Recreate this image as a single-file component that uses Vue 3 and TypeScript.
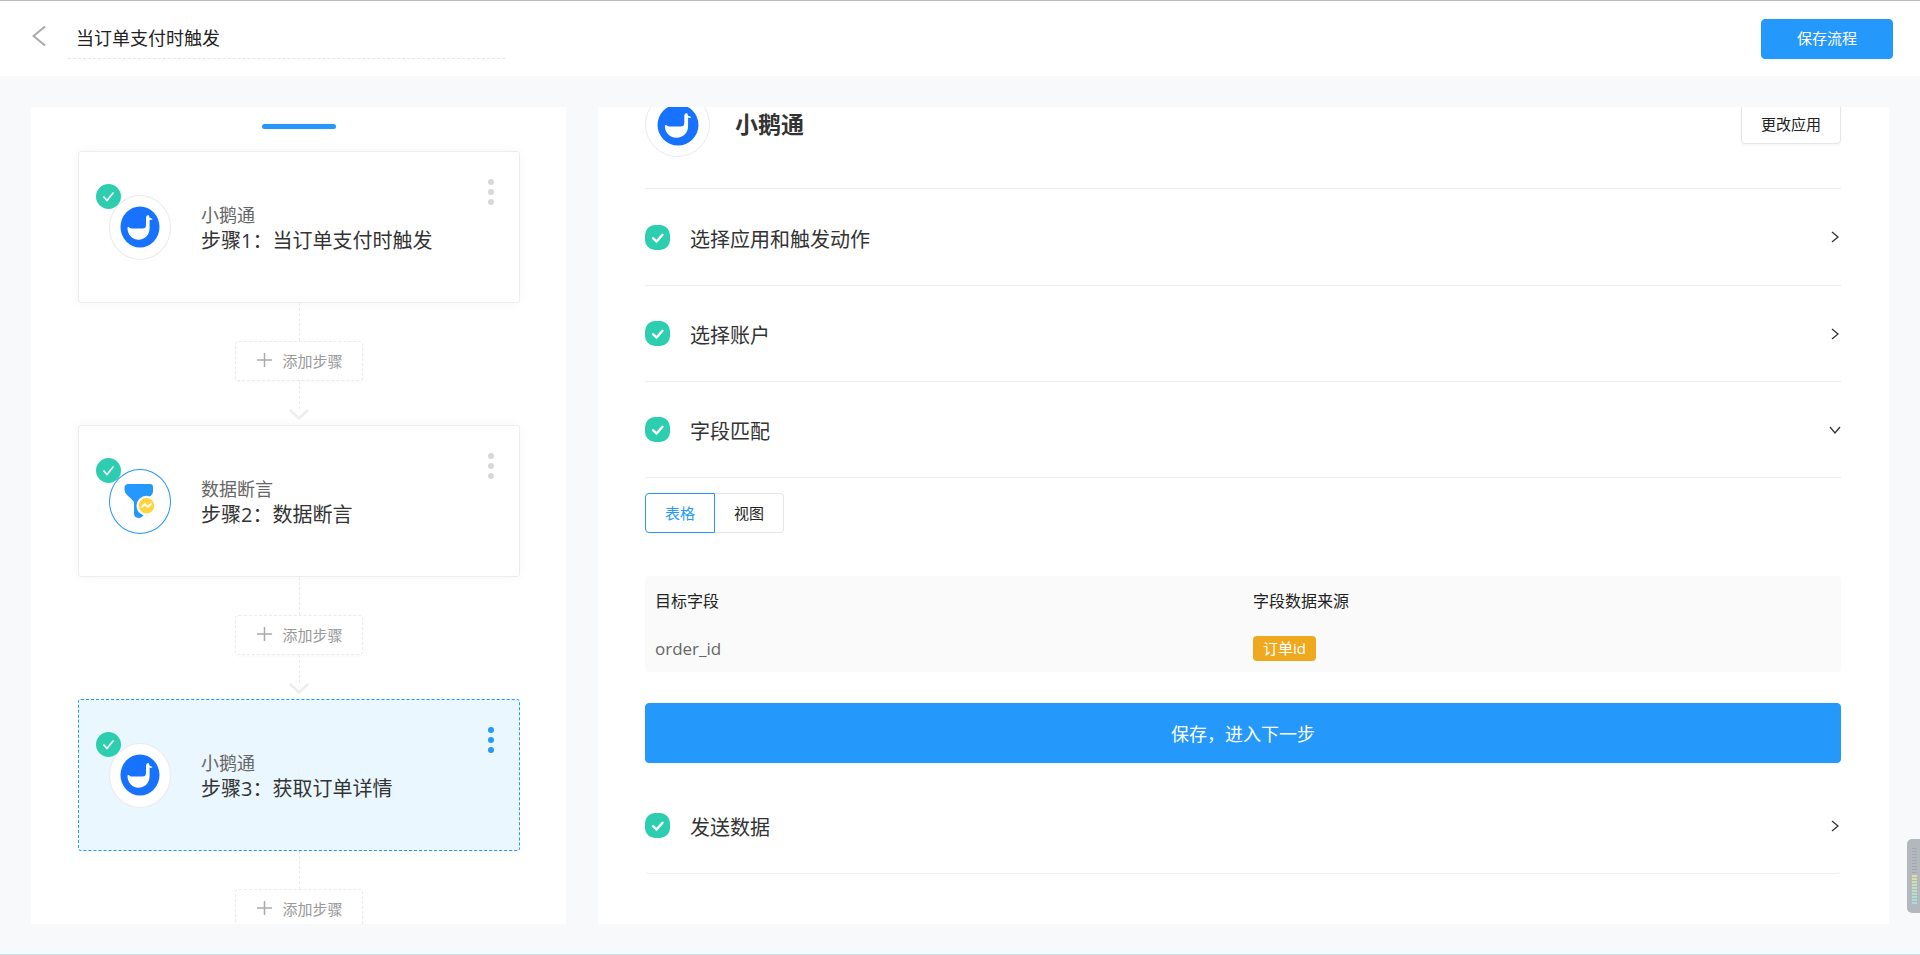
<script setup lang="ts">
import { ref } from 'vue'

interface Step {
  app: string
  title: string
  icon: 'goose' | 'filter'
}

const flowName = ref('当订单支付时触发')
const view = ref<'table' | 'graph'>('table')
const active = ref(2)

const steps: Step[] = [
  { app: '小鹅通', title: '步骤1：当订单支付时触发', icon: 'goose' },
  { app: '数据断言', title: '步骤2：数据断言', icon: 'filter' },
  { app: '小鹅通', title: '步骤3：获取订单详情', icon: 'goose' },
]

const openSections = ['选择应用和触发动作', '选择账户']
</script>

<template>
  <div class="page">
    <header class="topbar">
      <button class="back" type="button" aria-label="返回">
        <svg width="14" height="22" viewBox="0 0 14 22"><path d="M13 1.500L1.500 11L13 20.500" fill="none" stroke="#a9a9a9" stroke-width="2" /></svg>
      </button>
      <input v-model="flowName" class="flow-name" type="text" aria-label="流程名称" />
      <button class="btn primary save" type="button">保存流程</button>
    </header>

    <main class="columns">
      <section class="panel flow">
        <div class="marker"></div>
        <template v-for="(step, i) in steps" :key="i">
          <article class="card" :class="{ active: i === active }" @click="active = i">
            <div class="avatar" :class="step.icon">
              <svg v-if="step.icon === 'goose'" width="40" height="42" viewBox="0 0 40 42" preserveAspectRatio="none">
                <ellipse cx="20" cy="21" rx="19.500" ry="20.500" fill="#1672ff" />
                <path d="M7.500 22.500Q7.400 20.600 9 21.200Q10 22.600 12 22.600H22.500Q26 22.600 26 19V11.500Q26.200 9 28.200 9Q29.200 9 29.600 11.800L32.200 12.800V13.800H29.600V22C29.600 29 25 33.700 18.500 33.700C12 33.700 7.800 28.500 7.500 22.500Z" fill="#fff" />
              </svg>
              <svg v-else width="32" height="36" viewBox="0 0 32 36">
                <path d="M4.500 1H26Q29 1 29 4V8.500Q29 10.500 27 12.500L20 19V31.500Q18 35 14.500 35Q10 34.500 10 31V19.500Q9.500 17.500 4 13Q.5 10 .5 7V5Q.5 1 4.500 1Z" fill="#2598fb" />
                <circle cx="22.500" cy="22.700" r="10" fill="#fff" />
                <circle cx="22.500" cy="22.700" r="7.700" fill="#ffd43c" />
                <path d="M17.300 24.700L20.800 21.200L23.800 24L27.500 20.400" fill="none" stroke="#fff" stroke-width="1.800" />
              </svg>
              <span class="done">
                <svg width="25" height="25" viewBox="0 0 25 25"><path d="M7.500 12.500L11 16.500L17.500 8.500" fill="none" stroke="#fff" stroke-width="1.700" /></svg>
              </span>
            </div>
            <div class="info">
              <div class="app">{{ step.app }}</div>
              <div class="title">{{ step.title }}</div>
            </div>
            <button class="more" type="button" aria-label="更多"><i></i><i></i><i></i></button>
          </article>
          <div class="link">
            <span class="line upper"></span>
            <button class="add" type="button">
              <svg width="15" height="16" viewBox="0 0 15 16"><path d="M7.500 1V15M0 8H15" stroke="#aaa" stroke-width="1.500" /></svg>
              添加步骤
            </button>
            <span class="line lower"></span>
            <svg class="arrow" width="20" height="12" viewBox="0 0 20 12"><path d="M1.500 1.500L10 9.500L18.500 1.500" fill="none" stroke="#eee" stroke-width="2.500" stroke-linecap="round" /></svg>
          </div>
        </template>
      </section>

      <section class="panel detail">
        <div class="app-head">
          <div class="avatar big">
            <svg width="42" height="42" viewBox="0 0 40 42" preserveAspectRatio="none">
              <ellipse cx="20" cy="21" rx="19.500" ry="20.500" fill="#1672ff" />
              <path d="M7.500 22.500Q7.400 20.600 9 21.200Q10 22.600 12 22.600H22.500Q26 22.600 26 19V11.500Q26.200 9 28.200 9Q29.200 9 29.600 11.800L32.200 12.800V13.800H29.600V22C29.600 29 25 33.700 18.500 33.700C12 33.700 7.800 28.500 7.500 22.500Z" fill="#fff" />
            </svg>
          </div>
          <h2>小鹅通</h2>
          <button class="btn change" type="button">更改应用</button>
        </div>

        <button v-for="name in openSections" :key="name" class="row" type="button">
          <span class="tick"><svg width="25" height="25" viewBox="0 0 25 25"><path d="M8 13.200L11.500 16.500L17.500 9.800" fill="none" stroke="#fff" stroke-width="2.400" stroke-linecap="round" /></svg></span>
          <span class="label">{{ name }}</span>
          <svg class="chev" width="12" height="12" viewBox="0 0 12 12"><path d="M3 1L9 6L3 11" fill="none" stroke="#333" stroke-width="1.300" /></svg>
        </button>
        <button class="row" type="button">
          <span class="tick"><svg width="25" height="25" viewBox="0 0 25 25"><path d="M8 13.200L11.500 16.500L17.500 9.800" fill="none" stroke="#fff" stroke-width="2.400" stroke-linecap="round" /></svg></span>
          <span class="label">字段匹配</span>
          <svg class="chev" width="12" height="12" viewBox="0 0 12 12"><path d="M1 3L6 9L11 3" fill="none" stroke="#333" stroke-width="1.300" /></svg>
        </button>

        <div class="tabs">
          <button type="button" :class="{ on: view === 'table' }" @click="view = 'table'">表格</button>
          <button type="button" :class="{ on: view === 'graph' }" @click="view = 'graph'">视图</button>
        </div>

        <table class="fields">
          <thead>
            <tr><th>目标字段</th><th>字段数据来源</th></tr>
          </thead>
          <tbody>
            <tr><td>order_id</td><td><span class="tag">订单id</span></td></tr>
          </tbody>
        </table>

        <button class="btn primary next" type="button">保存，进入下一步</button>

        <button class="row last" type="button">
          <span class="tick"><svg width="25" height="25" viewBox="0 0 25 25"><path d="M8 13.200L11.500 16.500L17.500 9.800" fill="none" stroke="#fff" stroke-width="2.400" stroke-linecap="round" /></svg></span>
          <span class="label">发送数据</span>
          <svg class="chev" width="12" height="12" viewBox="0 0 12 12"><path d="M3 1L9 6L3 11" fill="none" stroke="#333" stroke-width="1.300" /></svg>
        </button>
      </section>
    </main>

    <div class="meter"><span class="off"></span><span class="lit"></span></div>
  </div>
</template>

<style>
html,
body {
  margin: 0;
}
</style>

<style scoped>
.page {
  box-sizing: border-box;
  height: 100vh;
  display: flex;
  flex-direction: column;
  overflow: hidden;
  background: #f7f9fb;
  border-top: 1px solid #bbb;
  border-bottom: 1px solid #c8e2ec;
  font-family: "Open Sans", "Noto Sans CJK SC", sans-serif;
  font-weight: 400;
  color: #333;
}
.page * {
  box-sizing: border-box;
}
button,
input {
  font-family: inherit;
  margin: 0;
}
button {
  cursor: pointer;
}
svg {
  display: block;
}
.topbar {
  height: 75px;
  flex: none;
  display: flex;
  align-items: center;
  padding: 0 27px 0 32px;
  background: #fff;
}
.back {
  padding: 0;
  border: 0;
  background: none;
  margin-bottom: 6px;
}
.flow-name {
  width: 437px;
  height: 40px;
  margin-left: 22px;
  padding: 0 8px 2px;
  border: 0;
  border-bottom: 1px dashed #e6e6e6;
  background: none;
  font-size: 18px;
  color: #222;
  outline: none;
}
.btn {
  padding: 0 0 2px;
  border-radius: 4px;
  border: 1px solid #e6e6e6;
  background: #fff;
  font-size: 15px;
  color: #222;
  box-shadow: 0 2px 2px rgba(0, 0, 0, 0.03);
}
.btn.primary {
  border-color: #2598fb;
  background: #2598fb;
  color: #fff;
}
.save {
  width: 132px;
  height: 40px;
  margin-left: auto;
}
.columns {
  flex: 1;
  min-height: 0;
  display: grid;
  grid-template-columns: 535fr 1291fr;
  gap: 32px;
  padding: 31px 31px 30px 31px;
}
.panel {
  background: #fff;
  overflow: hidden;
}
.flow {
  padding: 17px 46px 0 47px;
}
.marker {
  width: 74px;
  height: 5px;
  margin: 0 auto 22px;
  border-radius: 3px;
  background: #2598fb;
}
.card {
  height: 152px;
  display: flex;
  align-items: center;
  padding: 0 25px 0 30px;
  border: 1px solid #ededed;
  border-radius: 3px;
  background: #fff;
  box-shadow: 0 0 12px rgba(0, 0, 0, 0.04);
}
.card.active {
  border: 1px dashed #2598fb;
  background: #eaf7ff;
  box-shadow: none;
}
.avatar {
  position: relative;
  flex: none;
  width: 62px;
  height: 65px;
  display: flex;
  align-items: center;
  justify-content: center;
  border: 1px solid #ebebeb;
  border-radius: 50%;
  background: #fff;
}
.avatar.filter {
  border-color: #2598fb;
}
.avatar.big {
  width: 65px;
}
.done {
  position: absolute;
  left: -14px;
  top: -12px;
  border-radius: 50%;
  background: #2dcdb0;
}
.info {
  flex: 1;
  margin-left: 30px;
  padding-top: 2px;
}
.app {
  font-size: 18px;
  line-height: 26px;
  color: #666;
}
.title {
  font-size: 20px;
  line-height: 26px;
}
.more {
  align-self: flex-start;
  display: flex;
  flex-direction: column;
  gap: 4px;
  margin-top: 27px;
  padding: 0;
  border: 0;
  background: none;
}
.more i {
  width: 6px;
  height: 6px;
  border-radius: 50%;
  background: #d8d8d8;
}
.active .more i {
  background: #2598fb;
}
.link {
  height: 122px;
  display: flex;
  flex-direction: column;
  align-items: center;
}
.line {
  flex: none;
  width: 0;
  border-left: 1px dashed #ebebeb;
}
.upper {
  height: 38px;
}
.lower {
  height: 28px;
}
.add {
  flex: none;
  width: 128px;
  height: 40px;
  display: flex;
  align-items: center;
  justify-content: center;
  gap: 10px;
  padding: 0 0 2px 2px;
  border: 1px dashed #ebebeb;
  border-radius: 4px;
  background: #fff;
  font-size: 15px;
  color: #999;
  box-shadow: 0 2px 2px rgba(0, 0, 0, 0.02);
}
.arrow {
  flex: none;
}
.detail {
  padding: 0 48px 0 47px;
}
.app-head {
  height: 97px;
  margin-top: -15px;
  display: flex;
  align-items: flex-start;
  border-bottom: 1px solid #eee;
}
.app-head + .row {
  height: 97px;
}
.app-head h2 {
  margin: 0 0 0 25px;
  font-size: 23px;
  line-height: 65px;
  font-weight: 700;
}
.change {
  width: 100px;
  height: 40px;
  margin: 12px 0 0 auto;
}
.row {
  width: 100%;
  height: 96px;
  display: flex;
  align-items: center;
  padding: 0;
  border: 0;
  border-bottom: 1px solid #eee;
  background: none;
  color: #333;
}
.tick {
  border-radius: 10px;
  background: #2dcdb0;
}
.label {
  margin-left: 20px;
  padding-top: 2px;
  font-size: 20px;
}
.chev {
  margin-left: auto;
}
.tabs {
  display: flex;
  margin: 15px 0 43px;
}
.tabs button {
  width: 70px;
  height: 40px;
  padding: 0 0 2px;
  border: 1px solid #e6e6e6;
  background: #fff;
  font-size: 15px;
  color: #222;
}
.tabs button:first-child {
  border-radius: 4px 0 0 4px;
}
.tabs button:last-child {
  width: 69px;
  border-left: 0;
  border-radius: 0 4px 4px 0;
}
.tabs button.on {
  border: 1px solid #2598fb;
  color: #2598fb;
}
.fields {
  width: 100%;
  table-layout: fixed;
  border-collapse: collapse;
  border-radius: 4px;
  background: #fafafa;
}
.fields th,
.fields td {
  height: 48px;
  padding: 0 10px;
  text-align: left;
  font-weight: 400;
}
.fields th {
  font-size: 16px;
  color: #222;
}
.fields td {
  font-size: 17px;
  color: #666;
}
.tag {
  display: inline-block;
  padding: 0 10px;
  border-radius: 4px;
  background: #eea91e;
  font-size: 15px;
  line-height: 25px;
  color: #fff;
}
.next {
  display: block;
  width: 100%;
  height: 60px;
  margin: 31px 0 15px;
  padding: 0;
  font-size: 18px;
}
.last {
  border-radius: 0 0 4px 4px;
}
.meter {
  position: fixed;
  right: 0;
  top: 839px;
  width: 13px;
  height: 74px;
  padding: 9px 3px 8px 5px;
  border-radius: 5px 0 0 5px;
  background: #b3b8be;
}
.meter span {
  display: block;
}
.off {
  height: 27px;
  background: repeating-linear-gradient(#a2a7ae 0 1px, #b3b8be 1px 3px);
}
.lit {
  height: 30px;
  background: repeating-linear-gradient(transparent 0 2px, #b3b8be 2px 3px), linear-gradient(#dfe0a0, #bfe0c0 50%, #9de0df);
}
</style>
